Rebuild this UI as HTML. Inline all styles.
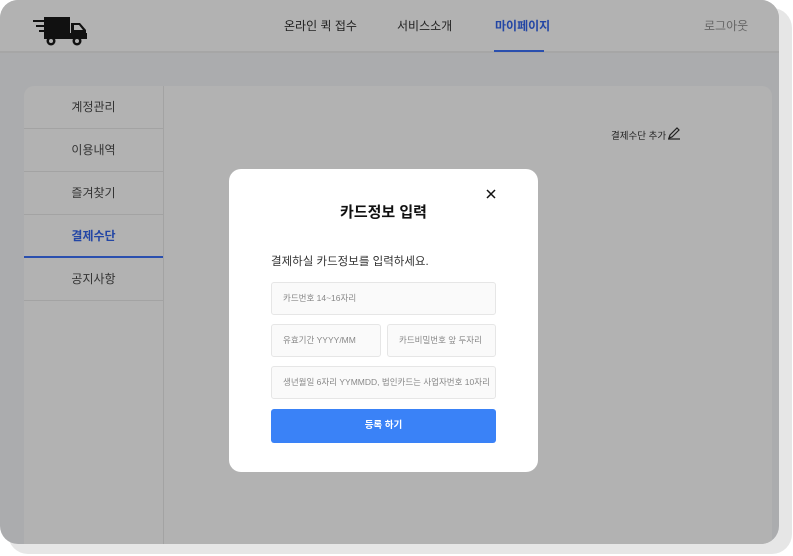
<!DOCTYPE html>
<html><head><meta charset="utf-8"><style>
*{margin:0;padding:0;box-sizing:border-box}
body{width:793px;height:556px;background:#fff;position:relative;overflow:hidden;font-family:"Liberation Sans","Noto Sans CJK KR",sans-serif}
.shadow{position:absolute;left:8px;top:8px;width:784px;height:546px;background:#e6e6e6;border-radius:20px}
.screen{position:absolute;left:0;top:0;width:779px;height:544px;background:#abacae;border-radius:18px;overflow:hidden}
.hdr{position:absolute;left:0;top:0;width:779px;height:53px;background:#b2b2b2;border-bottom:2px solid #a6a6a6}
.nav{position:absolute;top:17px;font-size:12px;color:#222}
.card{position:absolute;left:24px;top:86px;width:748px;height:470px;background:#b2b2b2;border-radius:10px;overflow:hidden}
.side{position:absolute;left:0;top:0;width:140px;height:470px;border-right:1px solid #a3a3a3}
.it{height:43px;border-bottom:1px solid #a3a3a3;text-align:center;line-height:42px;font-size:12px;color:#333}
.modal{position:absolute;left:229px;top:169px;width:309px;height:303px;background:#fff;border-radius:12px}
.inp{position:absolute;height:33px;border:1px solid #e6e6e6;border-radius:3px;background:#fafafa;font-size:8.5px;color:#888;padding-left:11px;line-height:31px}
</style></head><body>
<div class="shadow"></div>
<div class="screen">
<div class="hdr">
<svg style="position:absolute;left:32px;top:15px" width="60" height="32" viewBox="0 0 60 32">
<g fill="#111"><rect x="12" y="2" width="26" height="20"/><path d="M39 8h9l6 7v9H39z"/><rect x="12" y="18" width="43" height="6"/>
<rect x="1" y="5" width="12" height="2"/><rect x="4" y="10" width="9" height="2"/><rect x="7" y="15" width="6" height="2"/></g>
<path d="M42 10h5l4 5h-9z" fill="#b2b2b2"/>
<circle cx="19" cy="26" r="4.5" fill="#111"/><circle cx="19" cy="26" r="2" fill="#b2b2b2"/>
<circle cx="45" cy="26" r="4.5" fill="#111"/><circle cx="45" cy="26" r="2" fill="#b2b2b2"/>
</svg>
<div class="nav" style="left:284px">온라인 퀵 접수</div>
<div class="nav" style="left:397px">서비스소개</div>
<div class="nav" style="left:495px;color:#2346a5;font-weight:bold">마이페이지</div>
<div style="position:absolute;left:494px;top:50px;width:50px;height:2px;background:#2a4fae"></div>
<div class="nav" style="left:704px;color:#666">로그아웃</div>
</div>
<div class="card">
<div class="side">
<div class="it">계정관리</div><div class="it">이용내역</div><div class="it">즐겨찾기</div>
<div class="it" style="color:#2346a5;font-weight:bold;border-bottom:2px solid #2a4fae">결제수단</div>
<div class="it">공지사항</div>
</div>
<div style="position:absolute;left:587px;top:42px;font-size:9.5px;color:#222">결제수단 추가</div>
<svg style="position:absolute;left:643px;top:40px" width="14" height="14" viewBox="0 0 14 14"><path d="M2 12l1-3 7-7 2 2-7 7z M1 13h12" stroke="#222" stroke-width="1.2" fill="none"/></svg>
</div>
</div>
<div class="modal">
<div style="position:absolute;left:0;width:309px;top:32px;text-align:center;font-size:15px;font-weight:bold;color:#111">카드정보 입력</div>
<svg style="position:absolute;left:257px;top:20px" width="10" height="10" viewBox="0 0 10 10"><path d="M1 1L9 9M9 1L1 9" stroke="#111" stroke-width="1.5"/></svg>
<div style="position:absolute;left:42px;top:84px;font-size:11.5px;color:#333">결제하실 카드정보를 입력하세요.</div>
<div class="inp" style="left:42px;top:113px;width:225px">카드번호 14~16자리</div>
<div class="inp" style="left:42px;top:155px;width:110px">유효기간 YYYY/MM</div>
<div class="inp" style="left:158px;top:155px;width:109px">카드비밀번호 앞 두자리</div>
<div class="inp" style="left:42px;top:197px;width:225px">생년월일 6자리 YYMMDD, 법인카드는 사업자번호 10자리</div>
<div style="position:absolute;left:42px;top:240px;width:225px;height:34px;background:#3a82f7;border-radius:3px;color:#fff;font-size:9.5px;font-weight:bold;text-align:center;line-height:34px">등록 하기</div>
</div>
</body></html>
